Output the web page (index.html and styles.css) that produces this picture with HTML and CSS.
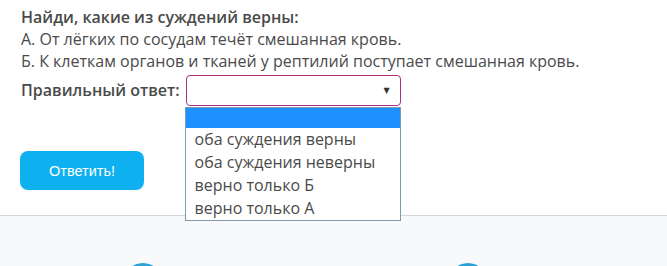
FILE: index.html
```html
<!DOCTYPE html>
<html lang="ru">
<head>
<meta charset="utf-8">
<link rel="stylesheet" href="styles.css">
</head>
<body>
<div class="task">
  <div class="question">
    <p class="title">Найди, какие из суждений верны:</p>
    <p>А. От лёгких по сосудам течёт смешанная кровь.</p>
    <p>Б. К клеткам органов и тканей у рептилий поступает смешанная кровь.</p>
  </div>
  <div class="answer-row">
    <span class="label">Правильный ответ:</span>
    <div class="select-wrap">
      <div class="select"><span class="arrow">▼</span></div>
      <ul class="dropdown">
        <li class="selected">&nbsp;</li>
        <li>оба суждения верны</li>
        <li>оба суждения неверны</li>
        <li>верно только Б</li>
        <li>верно только А</li>
      </ul>
    </div>
  </div>
  <button class="submit">Ответить!</button>
</div>
<div class="footer">
  <div class="circle"></div>
  <div class="circle"></div>
</div>
</body>
</html>
```

FILE: styles.css
```css
html, body {
  margin: 0;
  padding: 0;
  background: #ffffff;
}
body {
  font-family: "Open Sans", "DejaVu Sans", sans-serif;
  color: #4a4a4a;
  font-size: 16px;
}
.task {
  padding: 6px 0 0 21px;
  height: 216px;
  box-sizing: border-box;
  border-bottom: 1px solid #d4d7db;
}
.question p {
  margin: 0;
  line-height: 22px;
}
.question .title {
  font-weight: 600;
}
.answer-row {
  display: flex;
  align-items: center;
  margin-top: 2px;
  height: 32px;
}
.label {
  font-weight: 600;
  margin-right: 6px;
}
.select-wrap {
  position: relative;
}
.select {
  width: 215px;
  height: 31px;
  box-sizing: border-box;
  border: 1px solid #a8307e;
  border-radius: 4px;
  position: relative;
}
.arrow {
  position: absolute;
  right: 10px;
  top: 8px;
  font-size: 8px;
  color: #333;
}
.dropdown {
  position: absolute;
  left: -1px;
  top: 32px;
  width: 216px;
  box-sizing: border-box;
  margin: 0;
  padding: 0;
  list-style: none;
  background: #fff;
  border: 1px solid #7f9aae;
  z-index: 5;
}
.dropdown li {
  height: 23px;
  line-height: 23px;
  padding-left: 9px;
  color: #4a4a4a;
}
.dropdown li.selected {
  height: 20px;
  background: #1e90ff;
}
.submit {
  display: block;
  margin-top: 45px;
  margin-left: -1px;
  width: 124px;
  height: 39px;
  border: none;
  border-radius: 8px;
  background: #0fb0ef;
  color: #fff;
  font-family: "Liberation Sans", Arial, sans-serif;
  font-size: 14.5px;
  padding: 0;
}
.footer {
  background: #f8f9fa;
  height: 50px;
  position: relative;
  overflow: hidden;
}
.circle {
  position: absolute;
  top: 47px;
  width: 40px;
  height: 40px;
  border-radius: 50%;
  background: #2aa2d6;
}
.circle:first-child { left: 123px; }
.circle:last-child { left: 448px; }
```
